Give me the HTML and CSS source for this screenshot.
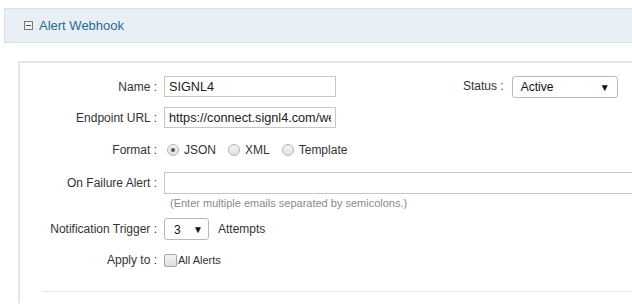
FILE: index.html
```html
<!DOCTYPE html>
<html>
<head>
<meta charset="utf-8">
<link rel="stylesheet" href="styles.css">
</head>
<body>
<div class="panel-header">
  <span class="collapse-icon"></span>
  <span class="panel-title">Alert Webhook</span>
</div>
<div class="content">
  <div class="row row-name">
    <div class="label">Name :</div>
    <input class="text-input short" type="text" value="SIGNL4">
    <div class="status-group">
      <span class="status-label">Status :</span>
      <div class="fake-select status-select"><span>Active</span><span class="arrow">&#9660;</span></div>
    </div>
  </div>
  <div class="row row-url">
    <div class="label">Endpoint URL :</div>
    <input class="text-input short" type="text" value="https://connect.signl4.com/webhook/">
  </div>
  <div class="row row-format">
    <div class="label">Format :</div>
    <label class="radio-opt"><input type="radio" name="fmt" checked><span>JSON</span></label>
    <label class="radio-opt"><input type="radio" name="fmt"><span>XML</span></label>
    <label class="radio-opt"><input type="radio" name="fmt"><span>Template</span></label>
  </div>
  <div class="row row-failure">
    <div class="label">On Failure Alert :</div>
    <input class="text-input long" type="text" value="">
  </div>
  <div class="hint">(Enter multiple emails separated by semicolons.)</div>
  <div class="row row-trigger">
    <div class="label">Notification Trigger :</div>
    <div class="fake-select trigger-select"><span>3</span><span class="arrow">&#9660;</span></div>
    <span class="attempts">Attempts</span>
  </div>
  <div class="row row-apply">
    <div class="label">Apply to :</div>
    <label class="check-opt"><input type="checkbox"><span>All Alerts</span></label>
  </div>
  <div class="separator"></div>
</div>
</body>
</html>
```
FILE: styles.css
```css
html, body {
  margin: 0;
  padding: 0;
  background: #ffffff;
  font-family: "Liberation Sans", Arial, sans-serif;
  color: #333333;
  overflow: hidden;
}
.panel-header {
  margin: 8px 0 0 4px;
  height: 33px;
  border: 1px solid #cfe3f1;
  border-right: none;
  background: #e8eff5;
  display: flex;
  align-items: center;
  padding-left: 19px;
}
.collapse-icon {
  width: 7px;
  height: 7px;
  border: 1px solid #7a7a7a;
  position: relative;
  background: #f4f4f4;
  margin-right: 6px;
  flex: none;
}
.collapse-icon::after {
  content: "";
  position: absolute;
  left: 1px;
  top: 3px;
  width: 5px;
  height: 1px;
  background: #555555;
}
.panel-title {
  font-size: 13px;
  color: #1f6b98;
}
.content {
  box-sizing: border-box;
  margin: 18px 0 0 18px;
  border-top: 2px solid #e6e6e6;
  border-left: 2px solid #e6e6e6;
  padding-top: 13px;
  height: 242px;
  overflow: hidden;
}
.row {
  display: flex;
  align-items: center;
  font-size: 12px;
}
.label {
  width: 137px;
  text-align: right;
  margin-right: 7px;
  flex: none;
  white-space: nowrap;
}
.text-input {
  box-sizing: border-box;
  height: 21px;
  border: 1px solid #c6c6c6;
  padding: 0 4px;
  font-family: "Liberation Sans", Arial, sans-serif;
  font-size: 12.7px;
  color: #222222;
  margin: 0;
  outline: none;
  flex: none;
}
.text-input.short { width: 172px; }
.text-input.long { width: 560px; height: 22px; }
.row-name { height: 21px; }
.row-url { margin-top: 10px; height: 21px; }
.row-format { margin-top: 12px; height: 20px; }
.row-failure { margin-top: 12px; height: 22px; }
.row-trigger { margin-top: 8px; height: 22px; }
.row-apply { margin-top: 12px; height: 16px; }
.status-group {
  display: flex;
  align-items: center;
  margin-left: 127px;
}
.status-label { margin-right: 8px; position: relative; top: -1px; }
.fake-select {
  box-sizing: border-box;
  display: flex;
  align-items: center;
  justify-content: space-between;
  border: 1px solid #b9b9b9;
  border-radius: 3px;
  background: #ffffff;
  color: #111111;
  font-size: 12px;
  flex: none;
}
.status-select {
  width: 106px;
  height: 22px;
  padding: 1px 7px 0 8px;
}
.trigger-select {
  width: 45px;
  height: 22px;
  padding: 1px 5px 0 9px;
}
.arrow {
  font-size: 10px;
  color: #111111;
}
.attempts { margin-left: 9px; color: #333333; }
.radio-opt {
  display: flex;
  align-items: center;
  margin-right: 12px;
}
.radio-opt:first-of-type { margin-left: 3px; }
.radio-opt input {
  appearance: none;
  -webkit-appearance: none;
  width: 12px;
  height: 12px;
  margin: 0 5px 0 0;
  border: 1px solid #b4b4b4;
  border-radius: 50%;
  background: linear-gradient(#f2f2f2, #e2e2e2);
  box-sizing: border-box;
  position: relative;
}
.radio-opt input:checked::after {
  content: "";
  position: absolute;
  left: 3px;
  top: 3px;
  width: 4px;
  height: 4px;
  border-radius: 50%;
  background: #555555;
}
.radio-opt span { color: #333333; }
.hint {
  margin: 2px 0 0 150px;
  font-size: 11px;
  color: #8a8a8a;
  height: 14px;
  line-height: 14px;
}
.check-opt {
  display: flex;
  align-items: center;
  font-size: 11px;
}
.check-opt input {
  appearance: none;
  -webkit-appearance: none;
  width: 13px;
  height: 13px;
  margin: 0 1px 0 0;
  border: 1px solid #a6a6a6;
  border-radius: 2px;
  background: linear-gradient(#f4f4f4, #dedede);
  box-sizing: border-box;
}
.separator {
  margin: 23px 0 0 22px;
  height: 1px;
  background: #e6e6e6;
}
```
